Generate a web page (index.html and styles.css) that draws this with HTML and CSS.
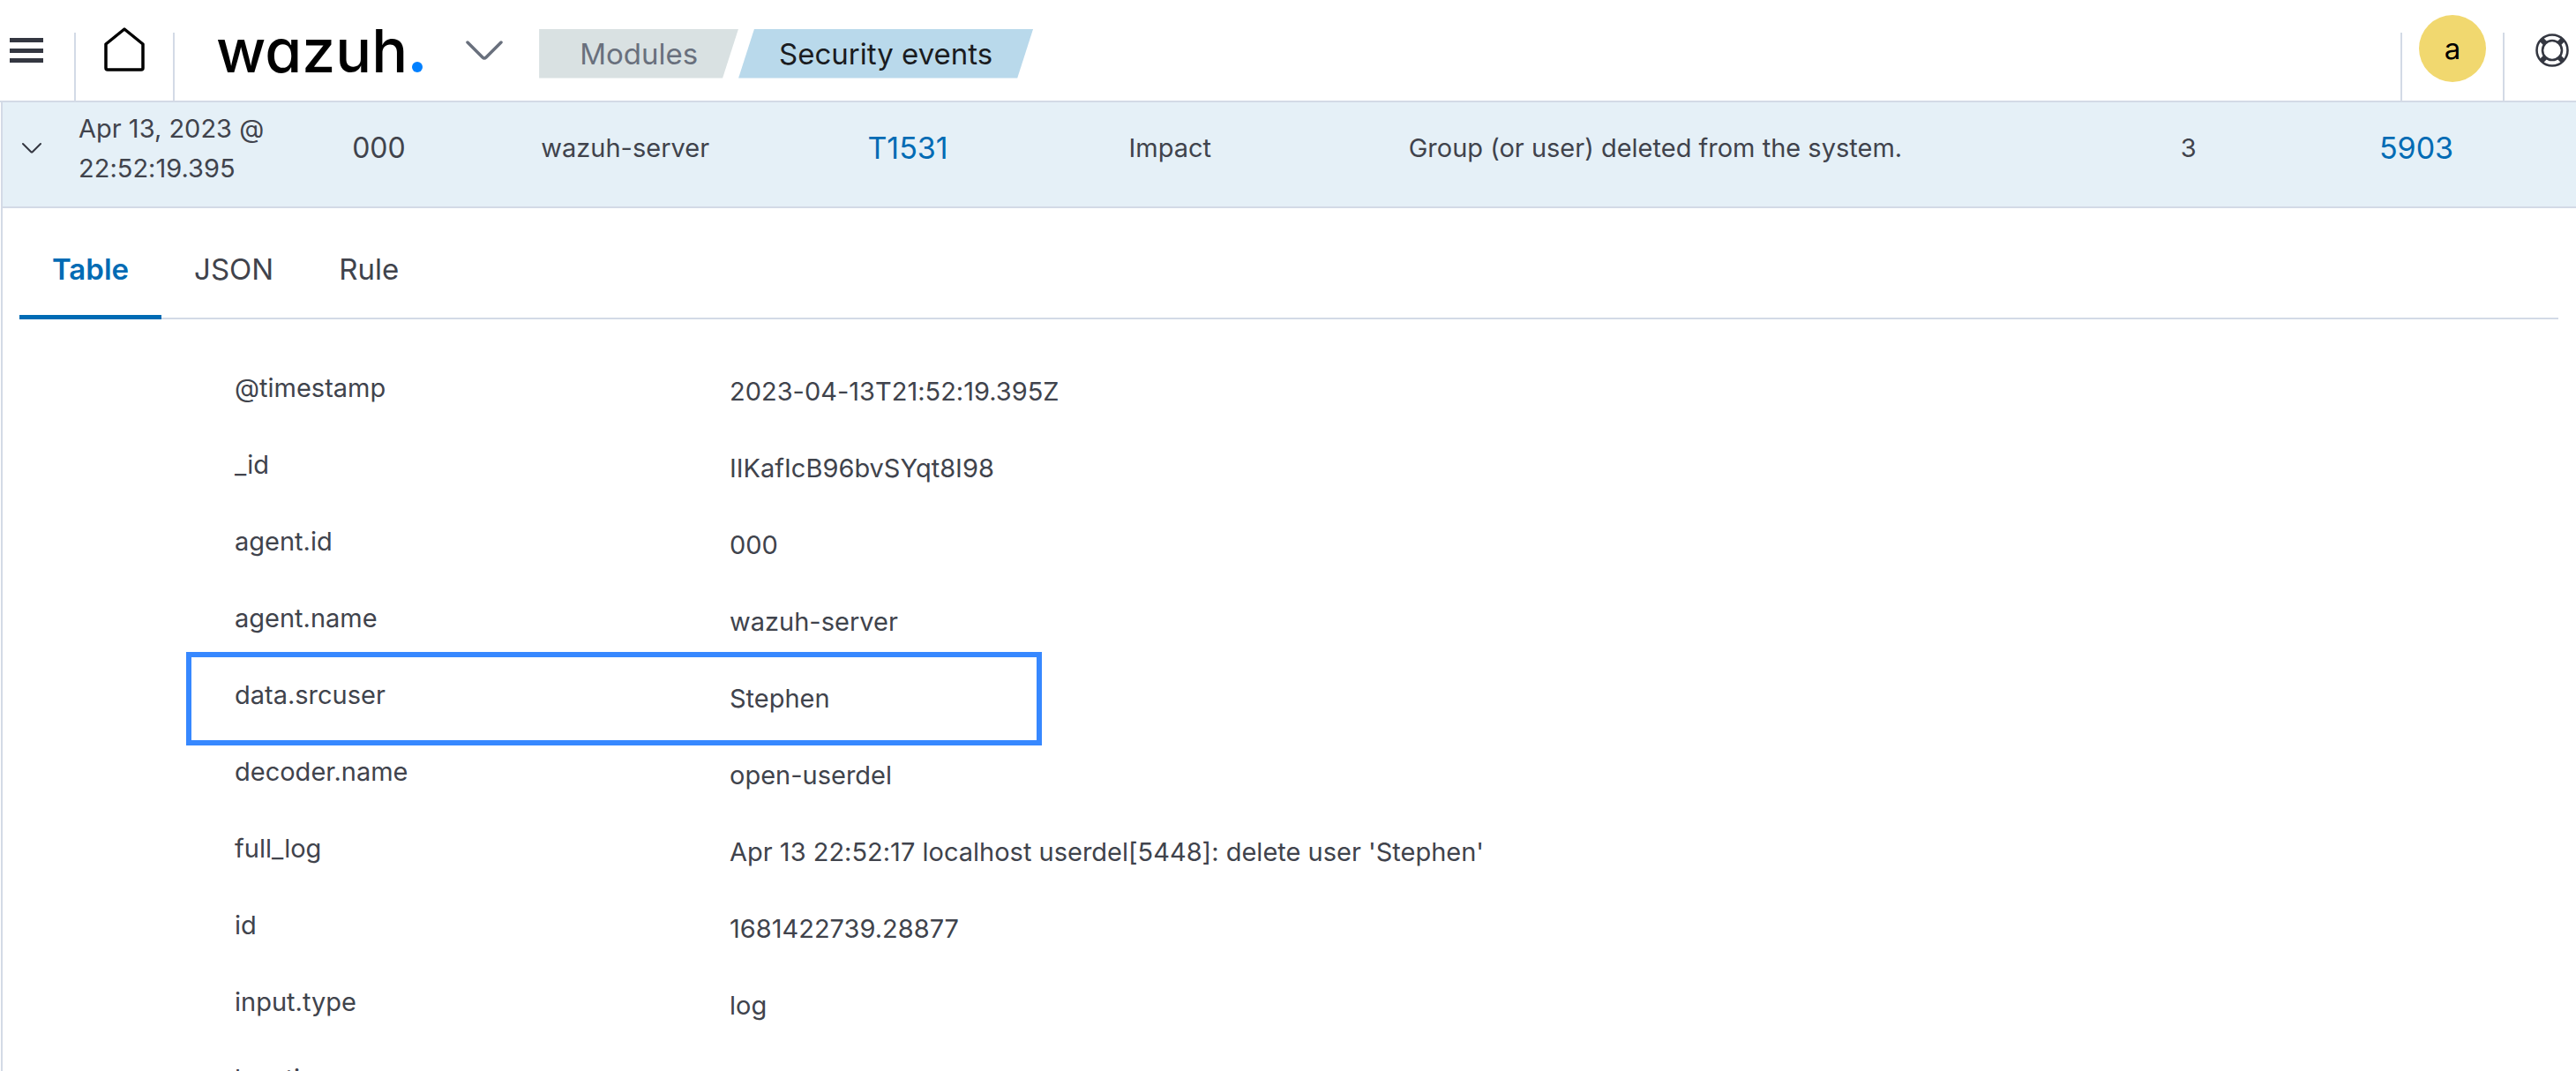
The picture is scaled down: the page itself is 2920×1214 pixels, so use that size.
FILE: index.html
```html
<!DOCTYPE html>
<html lang="en">
<head>
<meta charset="utf-8">
<title>Wazuh - Security events</title>
<link rel="stylesheet" href="styles.css">
</head>
<body>
<header class="topbar">
  <button class="icon-button menu-button" aria-label="Toggle navigation">
    <svg width="38" height="28" viewBox="0 0 38 28"><path d="M0 0h38v5H0zM0 12h38v5H0zM0 23h38v5H0z" fill="#343741"/></svg>
  </button>
  <a class="home" href="#" aria-label="Home">
    <svg width="46" height="50" viewBox="0 0 46 50" fill="none" stroke="#000" stroke-width="3.500" stroke-linejoin="round"><path d="M2 19 23 2l21 17v27q0 2-2 2H4q-2 0-2-2z"/></svg>
  </a>
  <a class="logo" href="#">wazuh<span class="logo-dot"></span></a>
  <button class="icon-button module-button" aria-label="Open module menu">
    <svg width="44" height="24" viewBox="0 0 44 24" fill="none" stroke="#69707d" stroke-width="3.500" stroke-linecap="round" stroke-linejoin="round"><path d="M3 3 20 20q2 2 4 0L41 3"/></svg>
  </button>
  <nav class="crumbs" aria-label="Breadcrumb">
    <a class="crumb crumb-first" href="#">Modules</a>
    <a class="crumb crumb-last" href="#" aria-current="page">Security events</a>
  </nav>
  <div class="account">
    <button class="avatar" aria-label="Account">a</button>
  </div>
  <button class="icon-button help-button" aria-label="Help">
    <svg width="38" height="38" viewBox="0 0 38 38" fill="none" stroke="#343741"><circle cx="19" cy="19" r="17.500" stroke-width="2.600"/><circle cx="19" cy="19" r="11" stroke-width="2.600"/><path d="M7 7l4.500 4.500M31 7l-4.500 4.500M7 31l4.500-4.500M31 31l-4.500-4.500" stroke-width="6"/></svg>
  </button>
</header>
<main class="panel">
  <table class="events">
    <colgroup><col class="c-toggle"><col class="c-time"><col class="c-agent"><col class="c-name"><col class="c-technique"><col class="c-tactic"><col class="c-description"><col class="c-level"><col class="c-rule"></colgroup>
    <tbody>
      <tr>
        <td class="toggle-cell"><button class="icon-button" aria-label="Collapse event"><svg width="22" height="14" viewBox="0 0 22 14" fill="none" stroke="#343741" stroke-width="2" stroke-linecap="round" stroke-linejoin="round"><path d="M1 2l9 9q1 1 2 0l9-9"/></svg></button></td>
        <td>Apr 13, 2023 @ 22:52:19.395</td>
        <td class="agent-cell">000</td>
        <td>wazuh-server</td>
        <td class="link-cell"><a href="#">T1531</a></td>
        <td>Impact</td>
        <td>Group (or user) deleted from the system.</td>
        <td>3</td>
        <td class="link-cell"><a href="#">5903</a></td>
      </tr>
    </tbody>
  </table>
  <div class="tabs" role="tablist">
    <button class="tab tab-active" role="tab" aria-selected="true">Table</button>
    <button class="tab" role="tab" aria-selected="false">JSON</button>
    <button class="tab" role="tab" aria-selected="false">Rule</button>
  </div>
  <table class="details">
    <tbody>
      <tr><th scope="row">@timestamp</th><td>2023-04-13T21:52:19.395Z</td></tr>
      <tr><th scope="row">_id</th><td>IIKafIcB96bvSYqt8I98</td></tr>
      <tr><th scope="row">agent.id</th><td>000</td></tr>
      <tr><th scope="row">agent.name</th><td>wazuh-server</td></tr>
      <tr class="highlight"><th scope="row">data.srcuser</th><td>Stephen</td></tr>
      <tr><th scope="row">decoder.name</th><td>open-userdel</td></tr>
      <tr><th scope="row">full_log</th><td>Apr 13 22:52:17 localhost userdel[5448]: delete user 'Stephen'</td></tr>
      <tr><th scope="row">id</th><td>1681422739.28877</td></tr>
      <tr><th scope="row">input.type</th><td>log</td></tr>
      <tr><th scope="row">location</th><td></td></tr>
    </tbody>
  </table>
</main>
</body>
</html>
```
FILE: styles.css
```css
*, ::after { box-sizing: border-box; }

body {
  margin: 0;
  height: 100vh;
  overflow: hidden;
  display: flex;
  flex-direction: column;
  background: #fff;
  color: #40434c;
  font: 29px/45px Inter, "Liberation Sans", sans-serif;
  font-optical-sizing: none;
  font-feature-settings: "calt" 0;
}

a { color: #006bb4; text-decoration: none; }

button {
  margin: 0;
  padding: 0;
  border: 0;
  background: none;
  color: inherit;
  font: inherit;
  cursor: pointer;
}

svg { display: block; }

.icon-button { display: flex; align-items: center; }

/* Top bar */
.topbar {
  flex: none;
  display: flex;
  align-items: center;
  height: 116px;
  border-bottom: 2px solid #d3dae6;
}

.menu-button { padding-left: 11px; width: 84px; }

.home {
  align-self: flex-end;
  height: 77px;
  width: 114px;
  padding-left: 32px;
  border: solid #d3dae6;
  border-width: 0 2px;
}

.home svg { margin-top: -6px; }

.logo {
  display: flex;
  align-items: baseline;
  gap: 5px;
  margin-left: 47px;
  color: #000;
  font-size: 68px;
  font-weight: 500;
  line-height: 80px;
  font-feature-settings: "cv11";
}

.logo-dot {
  width: 12px;
  height: 12px;
  border-radius: 50%;
  background: #0080ff;
}

.module-button { margin-left: 48px; }

.crumbs {
  display: flex;
  margin-left: 40px;
  padding-top: 7px;
  font-size: 33px;
  line-height: 56px;
}

.crumb { padding: 0 46px; }

.crumb-first {
  background: #d9e1e2;
  color: #69707d;
  clip-path: polygon(0 0, 100% 0, calc(100% - 18px) 100%, 0 100%);
}

.crumb-last {
  background: #b9d9eb;
  color: #1a1c21;
  clip-path: polygon(18px 0, 100% 0, calc(100% - 18px) 100%, 0 100%);
}

.account {
  align-self: flex-end;
  display: flex;
  justify-content: center;
  height: 77px;
  width: 118px;
  margin-left: auto;
  border: solid #d3dae6;
  border-width: 0 2px;
}

.avatar {
  width: 76px;
  height: 76px;
  margin-top: -20px;
  border-radius: 50%;
  background: #f1d86f;
  color: #000;
  font-size: 33px;
}

.help-button { width: 81px; padding-left: 35px; }

/* Expanded event */
.panel { flex: 1; margin-left: 1px; border-left: 2px solid #d3dae6; }

.events {
  width: 100%;
  height: 120px;
  table-layout: fixed;
  border-collapse: collapse;
  background: #e5f0f7;
  border-bottom: 2px solid #d3dae6;
}

.events td { padding: 0 0 15px; }
.events .toggle-cell { padding-left: 22px; }
.agent-cell { font-size: 32px; }
.link-cell { font-size: 34px; }

.c-toggle { width: 86px; }
.c-time { width: 310px; }
.c-agent { width: 214px; }
.c-name { width: 370px; }
.c-technique { width: 296px; }
.c-tactic { width: 317px; }
.c-description { width: 30%; }
.c-level { width: 225px; }
.c-rule { width: 223px; }

.tabs {
  display: flex;
  margin: 17px 20px 0 19px;
  border-bottom: 2px solid #d3dae6;
}

.tab {
  height: 109px;
  margin-bottom: -2px;
  padding: 0 37px;
  border-bottom: 5px solid transparent;
  font-size: 33px;
}

.tab-active {
  border-color: #006bb4;
  color: #006bb4;
  font-weight: 600;
}

.details {
  margin: 33px 0 0 208px;
  border-collapse: collapse;
}

.details tr { height: 87px; position: relative; }
.details th, .details td { padding: 0; text-align: left; vertical-align: top; }
.details th { width: 616px; padding: 22px 0 0 55px; font-weight: inherit; }
.details td { padding-top: 26px; }

.highlight::after {
  content: "";
  position: absolute;
  left: 0;
  top: -4px;
  width: 970px;
  height: 106px;
  border: 6px solid #3788ff;
}
```
